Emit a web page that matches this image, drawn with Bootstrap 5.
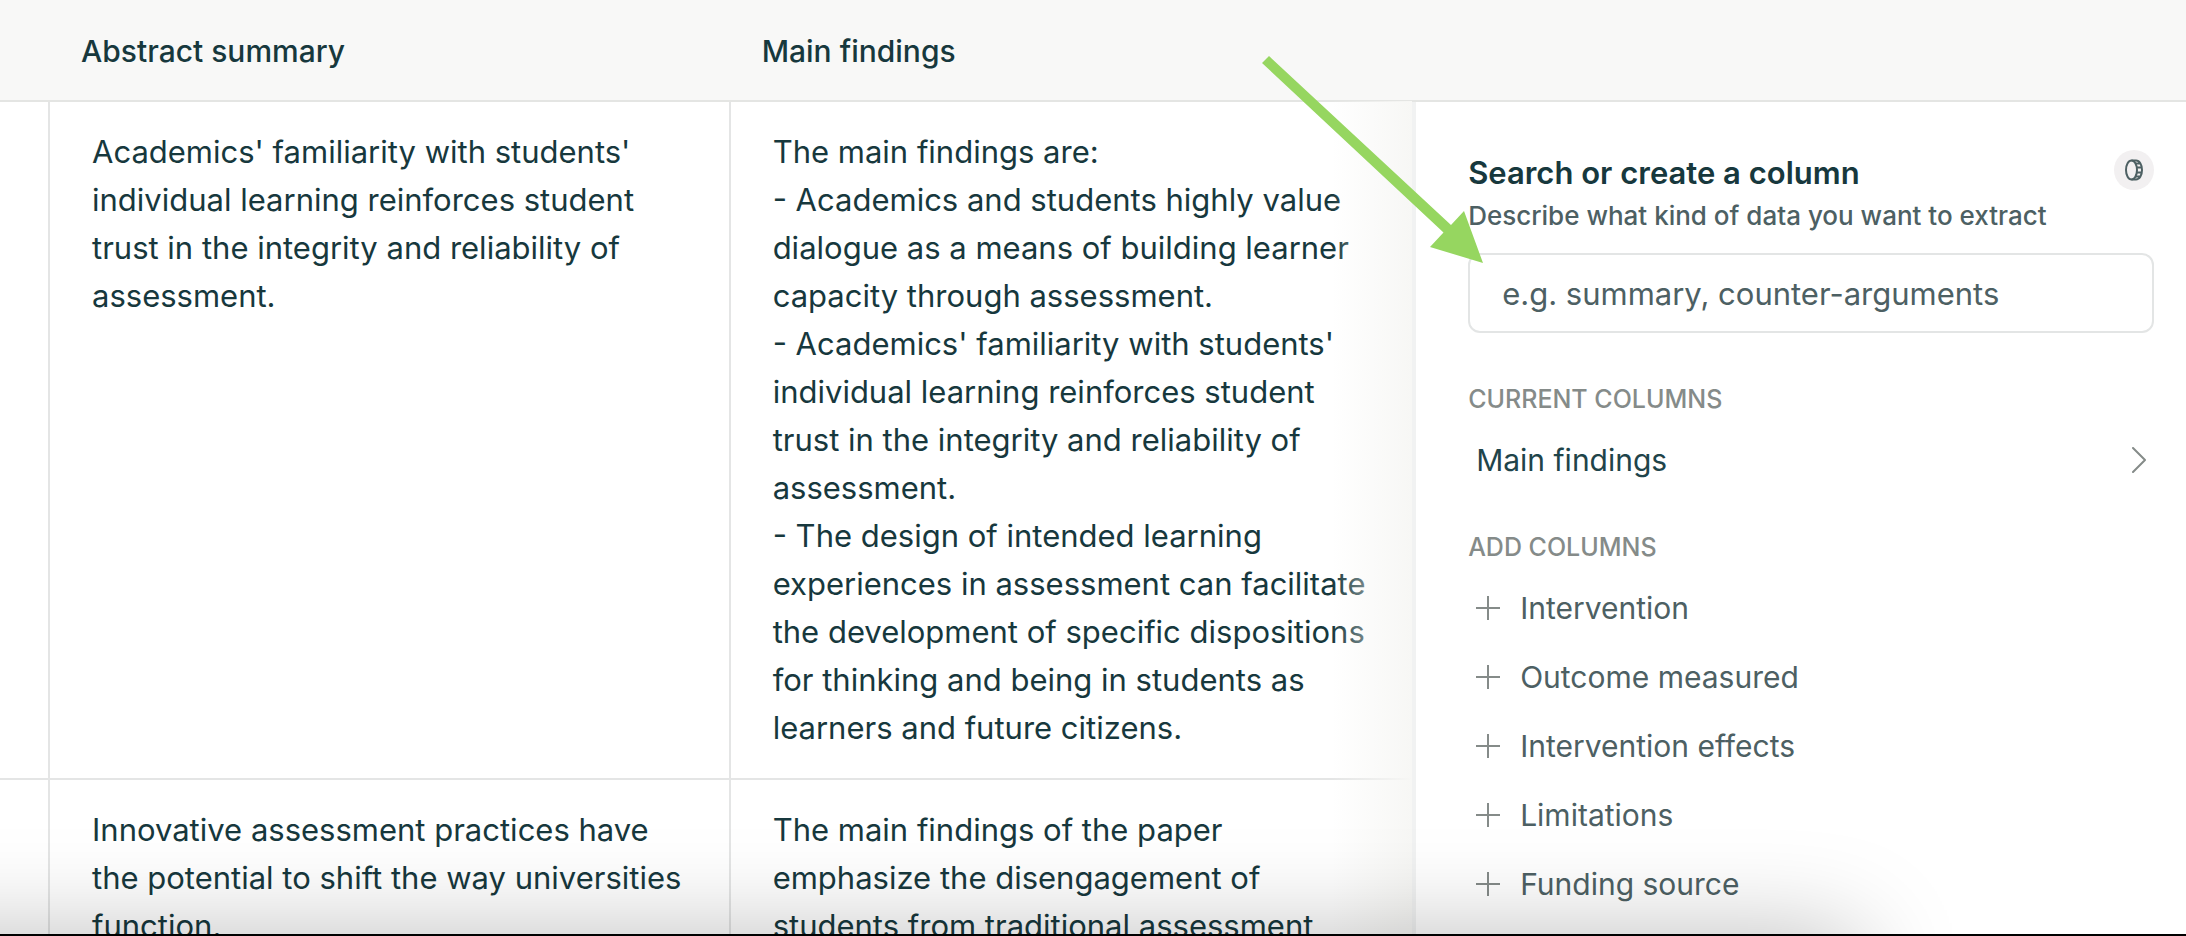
<!DOCTYPE html>
<html lang="en">
<head>
<meta charset="utf-8">
<meta name="viewport" content="width=device-width, initial-scale=1">
<title>Paper summaries</title>
<link href="https://cdn.jsdelivr.net/npm/bootstrap@5.3.0/dist/css/bootstrap.min.css" rel="stylesheet">
<style>
  body { font-family: Inter, "Liberation Sans", sans-serif; font-size: 31px; line-height: 48px; color: #17383d; }
  .page { border-bottom: 2px solid #000; background: #fff; }
  .results { width: 64.6%; }
  .results table { table-layout: fixed; width: 100%; }
  .results th { height: 101px; padding: 2px 32px 0; background: #f8f8f7; border-bottom: 2px solid #e4e5e3; font-size: 30px; font-weight: 500; }
  .results td { padding: 26px 32px 26px 42px; vertical-align: top; border-right: 2px solid #e4e5e5; border-bottom: 2px solid #e4e5e5; }
  .results td:last-child { border-right: 0; }
  .gutter { width: 49px; }
  .summary { width: 48.2%; }
  .edge-fade { top: 101px; right: 0; bottom: 0; width: 80px; background: linear-gradient(to right, rgba(247,247,245,0), #f7f7f5); }
  .panel-top { height: 102px; background: #f8f8f7; border-bottom: 2px solid #e4e5e3; }
  .panel-main { border-left: 4px solid #f1f2f2; padding: 48px 32px 0 52px; }
  .panel-title { font-size: 31px; line-height: 46px; font-weight: 600; }
  .hint { font-size: 26px; line-height: 40px; font-weight: 500; color: #4d6063; }
  .coin { width: 40px; height: 40px; background: #f2f0f1; }
  .search { height: 80px; margin-top: 17px; padding: 0 32px; border: 2px solid #e3e5e5; border-radius: 12px; font-size: 31px; color: #17383d; }
  .search::placeholder { color: #4d6063; opacity: 1; }
  .section-name { font-size: 25px; line-height: 36px; font-weight: 500; color: #858b89; text-transform: uppercase; }
  .add-name { margin-top: 35px; }
  .entry { height: 69px; padding: 0 8px; gap: 20px; border: 0; background: none; font-size: 30px; color: #4d6063; text-align: left; }
  .entry.current { color: #1f444a; }
  .pointer { left: -154px; top: 52px; z-index: 3; pointer-events: none; }
  .bottom-shade { left: -160px; right: 15%; top: 100%; height: 120px; box-shadow: 0 0 100px rgba(0,0,0,.26); z-index: 2; pointer-events: none; }
</style>
</head>
<body>
<div class="page vh-100 d-flex position-relative overflow-hidden">
  <main class="results position-relative flex-shrink-0">
    <table>
      <colgroup><col class="gutter"><col class="summary"><col></colgroup>
      <thead>
        <tr><th></th><th scope="col">Abstract summary</th><th scope="col">Main findings</th></tr>
      </thead>
      <tbody>
        <tr>
          <td></td>
          <td>Academics' familiarity with students' individual learning reinforces student trust in the integrity and reliability of assessment.</td>
          <td>The main findings are:<br>- Academics and students highly value dialogue as a means of building learner capacity through assessment.<br>- Academics' familiarity with students' individual learning reinforces student trust in the integrity and reliability of assessment.<br>- The design of intended learning experiences in assessment can facilitate the development of specific dispositions for thinking and being in students as learners and future citizens.</td>
        </tr>
        <tr>
          <td></td>
          <td>Innovative assessment practices have the potential to shift the way universities function.</td>
          <td>The main findings of the paper emphasize the disengagement of students from traditional assessment</td>
        </tr>
      </tbody>
    </table>
    <div class="edge-fade position-absolute"></div>
  </main>

  <aside class="flex-grow-1 d-flex flex-column position-relative">
    <div class="panel-top flex-shrink-0"></div>
    <form class="panel-main flex-grow-1">
      <div class="d-flex justify-content-between align-items-start">
        <label for="column-search">
          <span class="panel-title d-block">Search or create a column</span>
          <span class="hint d-block">Describe what kind of data you want to extract</span>
        </label>
        <button type="button" class="coin btn rounded-circle border-0 p-0 d-flex align-items-center justify-content-center flex-shrink-0" aria-label="Credits">
          <svg width="20" height="22" viewBox="0 0 20 22" fill="none" stroke="#4d6063" stroke-width="2">
            <ellipse cx="7.500" cy="11" rx="5.500" ry="9.500"/>
            <path d="M7.500 1.500H12C15.500 1.500 18 5.500 18 11S15.500 20.500 12 20.500H7.500M12 4.500H16M13 8.500H18M13 13.500H18M12 17.500H16"/>
          </svg>
        </button>
      </div>
      <input id="column-search" type="text" class="search w-100 d-block" placeholder="e.g. summary, counter-arguments">

      <h2 class="section-name mb-0 mt-5">Current columns</h2>
      <button type="button" class="entry current w-100 d-flex align-items-center justify-content-between mt-2">
        Main findings
        <svg width="14" height="26" viewBox="0 0 14 26" fill="none" stroke="#858b89" stroke-width="2" stroke-linecap="round" stroke-linejoin="round"><path d="M1 1L13 13L1 25"/></svg>
      </button>

      <h2 class="section-name mb-0 add-name">Add columns</h2>
      <div class="mt-2">
        <button type="button" class="entry w-100 d-flex align-items-center"><svg width="24" height="24" viewBox="0 0 24 24" stroke="#858b89" stroke-width="2"><path d="M12 0V24M0 12H24"/></svg>Intervention</button>
        <button type="button" class="entry w-100 d-flex align-items-center"><svg width="24" height="24" viewBox="0 0 24 24" stroke="#858b89" stroke-width="2"><path d="M12 0V24M0 12H24"/></svg>Outcome measured</button>
        <button type="button" class="entry w-100 d-flex align-items-center"><svg width="24" height="24" viewBox="0 0 24 24" stroke="#858b89" stroke-width="2"><path d="M12 0V24M0 12H24"/></svg>Intervention effects</button>
        <button type="button" class="entry w-100 d-flex align-items-center"><svg width="24" height="24" viewBox="0 0 24 24" stroke="#858b89" stroke-width="2"><path d="M12 0V24M0 12H24"/></svg>Limitations</button>
        <button type="button" class="entry w-100 d-flex align-items-center"><svg width="24" height="24" viewBox="0 0 24 24" stroke="#858b89" stroke-width="2"><path d="M12 0V24M0 12H24"/></svg>Funding source</button>
      </div>
    </form>
    <svg class="pointer position-absolute" width="230" height="216" viewBox="0 0 230 216" fill="#96d660"><path d="M11 4L193 173L206 159L225 211L172 195L185.500 180.500L4 11Z"/></svg>
  </aside>
  <div class="bottom-shade position-absolute"></div>
</div>
<script src="https://cdn.jsdelivr.net/npm/bootstrap@5.3.0/dist/js/bootstrap.bundle.min.js"></script>
</body>
</html>
